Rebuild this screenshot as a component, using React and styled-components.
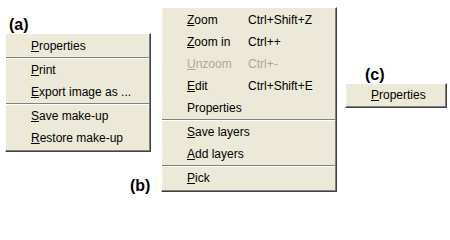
import React from "react";
import styled, { createGlobalStyle } from "styled-components";

const GlobalStyle = createGlobalStyle`
  html, body {
    margin: 0;
    padding: 0;
    background: #ffffff;
  }
  body {
    width: 450px;
    height: 200px;
    overflow: hidden;
    font-family: "Liberation Sans", Arial, sans-serif;
  }
`;

const Figure = styled.div`
  display: flex;
  align-items: flex-start;
  width: 450px;
  height: 200px;
`;

const PanelA = styled.div`
  display: flex;
  flex-direction: column;
  margin: 17px 0 0 5px;
`;

const PanelB = styled.div`
  display: flex;
  align-items: flex-end;
  margin: 7px 0 0 -24px;
`;

const PanelC = styled.div`
  display: flex;
  flex-direction: column;
  margin: 67px 0 0 8px;
`;

const Label = styled.div`
  font-family: "Liberation Sans", Arial, sans-serif;
  font-weight: bold;
  font-size: 16px;
  line-height: 16px;
  height: 16px;
  color: #000;
  padding-left: ${({ $indent }) => $indent || 0}px;
  width: ${({ $w }) => ($w ? `${$w}px` : "auto")};
  box-sizing: border-box;
  margin-bottom: ${({ $drop }) => ($drop ? `-${$drop}px` : 0)};
`;

const Menu = styled.div`
  box-sizing: border-box;
  width: ${({ $w }) => $w}px;
  background: #ece9d8;
  border-style: solid;
  border-width: 1px;
  border-color: #ffffff #404040 #404040 #ffffff;
  box-shadow: inset -1px -1px 0 #808080;
  display: flex;
  flex-direction: column;
  padding: 1px 0 2px;
`;

const Row = styled.div`
  display: flex;
  align-items: center;
  height: ${({ $h }) => $h || 22}px;
  padding-left: 25px;
  font-size: 12px;
  color: ${({ $disabled }) => ($disabled ? "#aca899" : "#000")};
  white-space: nowrap;
`;

const ItemText = styled.span`
  display: inline-block;
  min-width: ${({ $col }) => ($col ? `${$col}px` : "0")};
`;

const Key = styled.u`
  text-decoration: underline;
  text-underline-offset: 1px;
`;

const Shortcut = styled.span`
  font-size: 12px;
`;

const Separator = styled.div`
  height: 0;
  border-top: 1px solid #808080;
  border-bottom: 1px solid #ffffff;
  margin: 0 1px 0 0;
`;

const Item = ({ k, rest, shortcut, col, disabled, h }) => (
  <Row $disabled={disabled} $h={h}>
    <ItemText $col={col}>
      {k ? <Key>{k}</Key> : null}
      {rest}
    </ItemText>
    {shortcut ? <Shortcut>{shortcut}</Shortcut> : null}
  </Row>
);

export default function App() {
  return (
    <>
      <GlobalStyle />
      <Figure>
        <PanelA>
          <Label $indent={4}>(a)</Label>
          <Menu $w={146}>
            <Item k="P" rest="roperties" />
            <Separator />
            <Item k="P" rest="rint" />
            <Item k="E" rest="xport image as ..." />
            <Separator />
            <Item k="S" rest="ave make-up" />
            <Item k="R" rest="estore make-up" />
          </Menu>
        </PanelA>

        <PanelB>
          <Label $indent={3} $w={34} $drop={2}>(b)</Label>
          <Menu $w={176}>
            <Item k="Z" rest="oom" shortcut="Ctrl+Shift+Z" col={61} />
            <Item k="Z" rest="oom in" shortcut="Ctrl++" col={61} />
            <Item k="U" rest="nzoom" shortcut="Ctrl+-" col={61} disabled />
            <Item k="E" rest="dit" shortcut="Ctrl+Shift+E" col={61} />
            <Item rest="Properties" col={61} />
            <Separator />
            <Item k="S" rest="ave layers" />
            <Item k="A" rest="dd layers" />
            <Separator />
            <Item k="P" rest="ick" />
          </Menu>
        </PanelB>

        <PanelC>
          <Label $indent={20}>(c)</Label>
          <Menu $w={102}>
            <Item k="P" rest="roperties" h={20} />
          </Menu>
        </PanelC>
      </Figure>
    </>
  );
}
